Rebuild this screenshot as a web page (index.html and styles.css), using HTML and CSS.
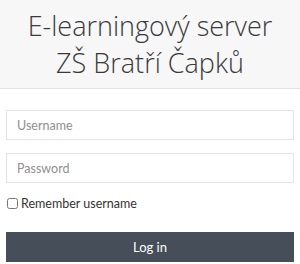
FILE: index.html
```html
<!DOCTYPE html>
<html lang="cs">
<head>
    <meta charset="UTF-8">
    <meta name="viewport" content="width=device-width, initial-scale=1.0">
    <title>E-learningový server ZŠ Bratří Čapků</title>
    <link rel="stylesheet" href="styles.css">
</head>
<body>
    <div class="header">
        <h1 class="site-name">E-learningový server ZŠ Bratří Čapků</h1>
    </div>

    <form class="login">
        <input class="field" type="text" placeholder="Username">
        <input class="field" type="password" placeholder="Password">
        <label class="remember"><input type="checkbox"> Remember username</label>
        <button class="login-btn" type="button">Log in</button>
    </form>
</body>
</html>
```

FILE: styles.css
```css
body {
    margin: 0;
    font-family: Lato, "Open Sans", sans-serif;
    color: #333;
    background: #fff;
}
.header {
    height: 88px;
    background-color: #f7f7f7;
    border-bottom: 1px solid #e3e3e3;
    display: flex;
    align-items: center;
    justify-content: center;
}
.site-name {
    margin: 0;
    padding: 0 20px;
    font-family: "Open Sans", sans-serif;
    font-size: 27px;
    font-weight: 300;
    line-height: 37px;
    text-align: center;
    color: #3a3a3a;
}
.login {
    display: flex;
    flex-direction: column;
    padding: 21px 6px 0;
}
.field {
    height: 30px;
    box-sizing: border-box;
    margin: 0 0 13px;
    padding: 0 10px;
    border: 1px solid #e1e3e6;
    border-radius: 0;
    font-family: inherit;
    font-size: 12.5px;
    color: #333;
}
.field::placeholder {
    color: #8f8f8f;
}
.remember {
    display: flex;
    align-items: center;
    gap: 3px;
    height: 14px;
    font-size: 12.5px;
    color: #333;
}
.remember input {
    margin: 0 0 0 1px;
    width: 11px;
    height: 11px;
}
.login-btn {
    margin-top: 22px;
    height: 30px;
    border: 0;
    background-color: #454e59;
    color: #fff;
    font-family: inherit;
    font-size: 13px;
}
```
